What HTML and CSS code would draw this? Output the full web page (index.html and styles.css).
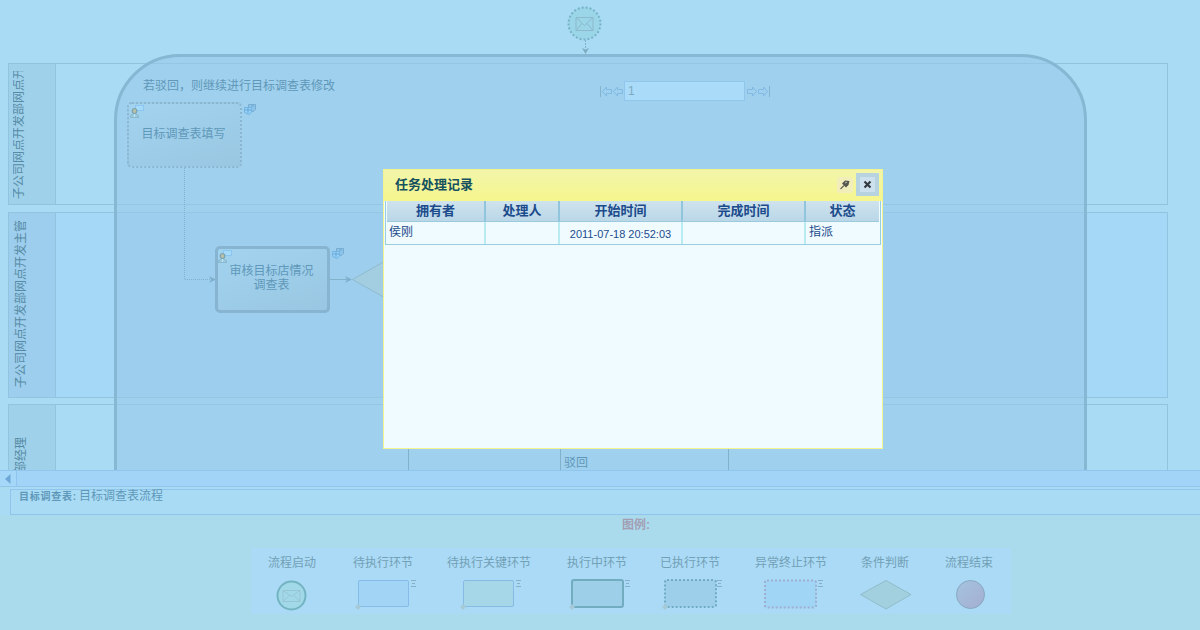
FILE: index.html
```html
<!DOCTYPE html>
<html lang="zh-CN">
<head>
<meta charset="utf-8">
<title>目标调查表流程</title>
<link rel="stylesheet" href="styles.css">
</head>
<body>
<svg class="defs" width="0" height="0">
  <defs>
    <linearGradient id="plum" x1="0" y1="0" x2="1" y2="1"><stop offset="0" stop-color="#a4c4df"/><stop offset="1" stop-color="#a5add0"/></linearGradient>
    <symbol id="user" viewBox="0 0 15 15">
      <rect x="6.5" y="1.500" width="8" height="5" fill="#a5dafa" stroke="#8cc6ee"/>
      <path d="M1.500 13.500v-2l3-2h2l3 2v2z" fill="#9cc7d8" stroke="#7fb0c8" stroke-width=".7"/>
      <circle cx="5.500" cy="7" r="2.500" fill="#b6bea5" stroke="#6f9bad"/>
      <path d="M5.500 10v3" stroke="#b5e5f7" stroke-width="1.300"/>
    </symbol>
    <symbol id="win" viewBox="0 0 12 12">
      <path d="M4.500 1.500H11.500V6.500L9 8.500H4.500z" fill="#8cc4ea" stroke="#78add2"/>
      <path d="M.5 4.500H7.500V9.500L5 11.500L.5 9.500z" fill="#94d2fa" stroke="#74b2e0"/>
      <path d="M1 7h6M4 5v5M7 3h3" stroke="#6aa6d4"/>
    </symbol>
    <symbol id="list" viewBox="0 0 7 8"><path d="M1 .5h5M2 3.500h3M1 6.500h5" stroke="#86b0c8"/></symbol>
  </defs>
</svg>

<main class="canvas">
  <section class="lane lane-first"><div class="lane-head"><span class="lane-name">子公司网点开发部网点开</span></div></section>
  <section class="lane lane-second"><div class="lane-head"><span class="lane-name">子公司网点开发部网点开发主管</span></div></section>
  <section class="lane lane-third"><div class="lane-head"><span class="lane-name">部经理</span></div></section>

  <div class="frame"></div>
  <svg class="wires" width="1200" height="470" fill="none">
    <g stroke="#82b1cc">
      <circle cx="584.500" cy="23.500" r="16" fill="#9ad5e8" stroke="#76b2c8" stroke-width="2" stroke-dasharray="2 2"/>
      <path d="M576 17.500h17v13h-17zM576 17.500l8.500 8 8.500-8M576 30.500l6-7M593 30.500l-6-7" stroke="#8dbaca"/>
      <path d="M585.500 40v9" stroke-dasharray="2 1"/>
      <path d="M582 48l3.500 1.500L589 48l-3.500 6z" fill="#7fabc3" stroke="none"/>
      <path d="M184.500 168v111.500H211" stroke-dasharray="1 1"/>
      <path d="M209 276l7 3.500-7 3.500 2-3.500z" fill="#7fb0cb" stroke="none"/>
      <path d="M330 279.500h18"/>
      <path d="M345 276l7 3.500-7 3.500 2-3.500z" fill="#7fb0cb" stroke="none"/>
      <path d="M352.500 279.500L395 255.500V303.500z" fill="#a3cde0" stroke="#8fbbcd"/>
      <path d="M408.500 448v22M560.500 448v22M728.500 448v22"/>
    </g>
  </svg>
  <p class="note note-reject">若驳回，则继续进行目标调查表修改</p>
  <div class="task task-done">目标调查表填写<svg class="badge" width="15" height="15"><use href="#user"/></svg></div>
  <svg class="windows windows-a" width="12" height="12"><use href="#win"/></svg>
  <div class="task task-active">审核目标店情况<br>调查表<svg class="badge" width="15" height="15"><use href="#user"/></svg></div>
  <svg class="windows windows-b" width="12" height="12"><use href="#win"/></svg>
  <p class="note note-back">驳回</p>
  <div class="pager">
    <svg width="24" height="12" fill="none" stroke="#7fb9e4"><path d="M.5 1v11" stroke="#83b3cf"/><path d="M2.500 6.500l4-4.500v2.500h5v4h-5V11zM13.500 6.500l4-4.500v2.500h5v4h-5V11z"/></svg>
    <span class="page-no">1</span>
    <svg width="25" height="12" fill="none" stroke="#7fb9e4"><path d="M11.500 6.500l-4-4.500v2.500h-5v4h5V11zM22.500 6.500l-4-4.500v2.500h-5v4h5V11z"/><path d="M24.500 1v11" stroke="#83b3cf"/></svg>
  </div>
</main>

<div class="scrollbar"><div class="scroll-left"><svg width="6" height="10"><path d="M5.500 0v10L0 5z" fill="#6fa8d6"/></svg></div></div>
<div class="process"><span class="process-label">目标调查表:</span><span>目标调查表流程</span></div>

<footer class="footer">
  <h2 class="legend-title">图例:</h2>
  <div class="legend">
    <div class="item w4"><span>流程启动</span><svg width="32" height="34" fill="none"><circle cx="15.500" cy="17.500" r="14" fill="#a2d9e8" stroke="#74b4c2" stroke-width="2"/><path d="M7 12.500h17v11H7zM7 12.500l8.500 6 8.500-6M7 23.500l6-6M24 23.500l-6-6" stroke="#98c5d4"/></svg></div>
    <div class="item w5"><span>待执行环节</span><svg width="62" height="34"><rect x="6.500" y="2.500" width="50" height="26" rx="1.500" fill="#a1d4f5" stroke="#87bbe9"/><use href="#list" x="58" y="2" width="7" height="8"/><path d="M3 29l3-3 3 3-3 3z" fill="#a5c9d6"/></svg></div>
    <div class="item w7"><span>待执行关键环节</span><svg width="62" height="34"><rect x="5.500" y="2.500" width="50" height="26" rx="1.500" fill="#a5d7e8" stroke="#87bbe3"/><use href="#list" x="57" y="2" width="7" height="8"/><path d="M2 29l3-3 3 3-3 3z" fill="#a5c9d6"/></svg></div>
    <div class="item w5"><span>执行中环节</span><svg width="62" height="34"><rect x="6" y="2" width="51" height="27" rx="2" fill="#9dcfe9" stroke="#72acc0" stroke-width="2"/><use href="#list" x="58" y="2" width="7" height="8"/><path d="M3 29l3-3 3 3-3 3z" fill="#a5c9d6"/></svg></div>
    <div class="item w5"><span>已执行环节</span><svg width="62" height="34"><rect x="6" y="2" width="51" height="27" rx="2" fill="#9dcfea" stroke="#72acc4" stroke-width="2" stroke-dasharray="2 2"/><use href="#list" x="57" y="2" width="7" height="8"/><path d="M3 29l3-3 3 3-3 3z" fill="#a5c9d6"/></svg></div>
    <div class="item w6"><span>异常终止环节</span><svg width="62" height="34"><rect x="5" y="2.500" width="51" height="27" rx="2" fill="#a1d5f6" stroke="#9daed1" stroke-width="2" stroke-dasharray="2 2"/><use href="#list" x="57" y="2" width="7" height="8"/></svg></div>
    <div class="item w4"><span>条件判断</span><svg width="52" height="34"><path d="M1.500 16.500L27 2.500 52 16.500 27 31z" fill="#a2d0df" stroke="#91bccb"/></svg></div>
    <div class="item w4"><span>流程结束</span><svg width="30" height="34"><circle cx="16.500" cy="16.500" r="14" fill="url(#plum)" stroke="#87a8c2"/></svg></div>
  </div>
</footer>

<section class="dialog">
  <header class="dialog-bar">
    <h1>任务处理记录</h1>
    <span class="tool"><svg width="10" height="10"><path d="M5 .5l4.500 .5-1 4-2.500 2.500-4-4z" fill="#54564f"/><path d="M.5 9l3.500-3.500" stroke="#66675c" stroke-width="1.200"/><path d="M5 3l2-1" stroke="#c7c6b0"/></svg></span>
    <span class="tool tool-close"><svg width="9" height="9"><path d="M1.500 1.500l6 6M7.500 1.500l-6 6" stroke="#343a40" stroke-width="2.200"/></svg></span>
  </header>
  <div class="records">
    <div class="row row-head"><span>拥有者</span><span>处理人</span><span>开始时间</span><span>完成时间</span><span>状态</span></div>
    <div class="row"><span>侯刚</span><span></span><span class="time">2011-07-18 20:52:03</span><span></span><span>指派</span></div>
  </div>
</section>
</body>
</html>
```
FILE: styles.css
```css
* { box-sizing: border-box; }
body {
  margin: 0;
  width: 1200px;
  height: 630px;
  overflow: hidden;
  position: relative;
  background: #a9dbed;
  color: #5f98b9;
  font: 12px/14px "Liberation Sans", "Noto Sans CJK SC", sans-serif;
}
.defs { position: absolute; }
svg { display: block; flex: none; overflow: visible; }
p, h1, h2 { margin: 0; font-size: 12px; font-weight: 400; }

/* Process diagram */
.canvas {
  position: relative;
  height: 470px;
  overflow: hidden;
  padding: 63px 32px 0 8px;
  background: #a9dbf4;
}
.lane {
  display: flex;
  height: 142px;
  margin-bottom: 7px;
  border: 1px solid #91c4df;
}
.lane-second { height: 186px; margin-bottom: 6px; background: #a5d8f7; }
.lane-head {
  width: 47px;
  padding: 7px 0 5px 4px;
  display: flex;
  align-items: flex-end;
  border-right: 1px solid #91c4df;
  background: #9fd1ea;
}
.lane-second .lane-head { background: #9dceed; padding: 0 0 9px 6px; }
.lane-third .lane-head { align-items: flex-start; padding: 32px 0 0 6px; }
.lane-name {
  writing-mode: vertical-rl;
  text-orientation: sideways;
  transform: rotate(180deg);
  line-height: 13px;
  white-space: nowrap;
  color: #578ba5;
}
.lane-first .lane-name { max-height: 128px; overflow: hidden; }
.frame {
  position: absolute;
  left: 114px;
  top: 54px;
  width: 973px;
  height: 500px;
  border: 3px solid #86b7d3;
  border-radius: 66px;
  background: rgba(154, 200, 232, .6);
}
.wires { position: absolute; left: 0; top: 0; }
.note { position: absolute; white-space: nowrap; }
.note-reject { left: 143px; top: 79px; }
.note-back { left: 564px; top: 456px; }
.task {
  position: absolute;
  width: 115px;
  text-align: center;
  border-radius: 5px;
  background: linear-gradient(160deg, #a2d3ef, #99c7e2);
}
.task-done { left: 127px; top: 102px; height: 66px; padding: 23px 2px 0 0; border: 2px dotted #8ab6d2; }
.task-active { left: 215px; top: 246px; height: 67px; padding: 15px 2px 0 0; border: 3px solid #86b4d1; }
.badge { position: absolute; left: 0; top: 0; }
.task-active .badge { left: -1px; }
.windows { position: absolute; }
.windows-a { left: 244px; top: 103px; }
.windows-b { left: 332px; top: 247px; }
.pager { position: absolute; left: 600px; top: 81px; display: flex; align-items: center; }
.page-no {
  width: 121px;
  height: 20px;
  padding: 2px 3px;
  border: 1px solid #91c6ec;
  background: #aadbf8;
  color: #7caac3;
}

/* Scrollbar and process name */
.scrollbar {
  height: 17px;
  border: solid #90c5ed;
  border-width: 1px 0;
  background: #a1d4f6;
}
.scroll-left {
  width: 17px;
  height: 15px;
  padding: 3px 0 0 5px;
  border-right: 1px solid #90c5ed;
  background: #a5d8f8;
}
.process {
  display: flex;
  gap: 3px;
  width: 1190px;
  height: 26px;
  margin: 2px 0 0 10px;
  border: 1px solid #8fc5ec;
  border-right: 0;
  padding-left: 8px;
  line-height: 13px;
  background: #a9dbf5;
  box-shadow: 0 -2px #a9dbf5, -10px 0 #a9dbf5;
}
.process-label { width: 57px; font-size: 10px; font-weight: 700; line-height: 14px; letter-spacing: .75px; white-space: nowrap; }

/* Legend */
.footer { padding-top: 3px; }
.legend-title { padding-left: 622px; font-weight: 700; color: #a49eb4; }
.legend {
  display: grid;
  grid-template-columns: 85px 94px 120px 93px 95px 106px 84px 48px;
  width: 760px;
  height: 66px;
  margin: 16px 0 0 251px;
  padding: 8px 0 0 17px;
  background: #aadaf6;
  color: #72a0b5;
}
.item { display: flex; flex-direction: column; align-items: center; gap: 8px; white-space: nowrap; }
.w4 { width: 48px; }
.w5 { width: 60px; }
.w6 { width: 72px; }
.w7 { width: 84px; }

/* Task record dialog */
.dialog {
  position: absolute;
  left: 383px;
  top: 169px;
  width: 500px;
  height: 280px;
  padding-left: 1px;
  border: 1px solid #f3f48f;
  background: #f0fbff;
  color: #1c4b8c;
}
.dialog-bar {
  display: flex;
  align-items: center;
  height: 31px;
  margin-left: -1px;
  padding: 0 3px 2px 11px;
  background: linear-gradient(#f2f5a9, #f5f68d);
}
.dialog-bar h1 { flex: 1; font-size: 13px; font-weight: 700; color: #15515f; }
.tool {
  display: flex;
  align-items: center;
  justify-content: center;
  width: 16px;
  height: 16px;
  margin-right: 3px;
  border-radius: 3px;
  background: #f2eebb;
}
.tool-close { width: 23px; height: 23px; margin: 0; border: 4px solid #b7d3df; border-radius: 0; background: #cce1ed; }
.records { width: 496px; border: solid #9acdde; border-width: 0 1px 1px; }
.row { display: grid; grid-template-columns: 100px 74px 123px 123px 1fr; height: 22px; }
.row span { padding: 3px 3px 0; border-right: 2px solid #b9ecf2; }
.row span:last-child { border-right: 0; }
.row-head { height: 21px; margin: 0 1px; grid-template-columns: 99px 74px 123px 123px 1fr; font-weight: 700; font-size: 13px; text-align: center; border-bottom: 1px solid #9bcadd; background: linear-gradient(#cfe3ed, #bad7e8); }
.row-head span { border-right: 2px solid #91c5dc; padding: 3px 0 0; }
.row .time { padding-top: 5px; text-align: center; font-size: 11px; }
```
